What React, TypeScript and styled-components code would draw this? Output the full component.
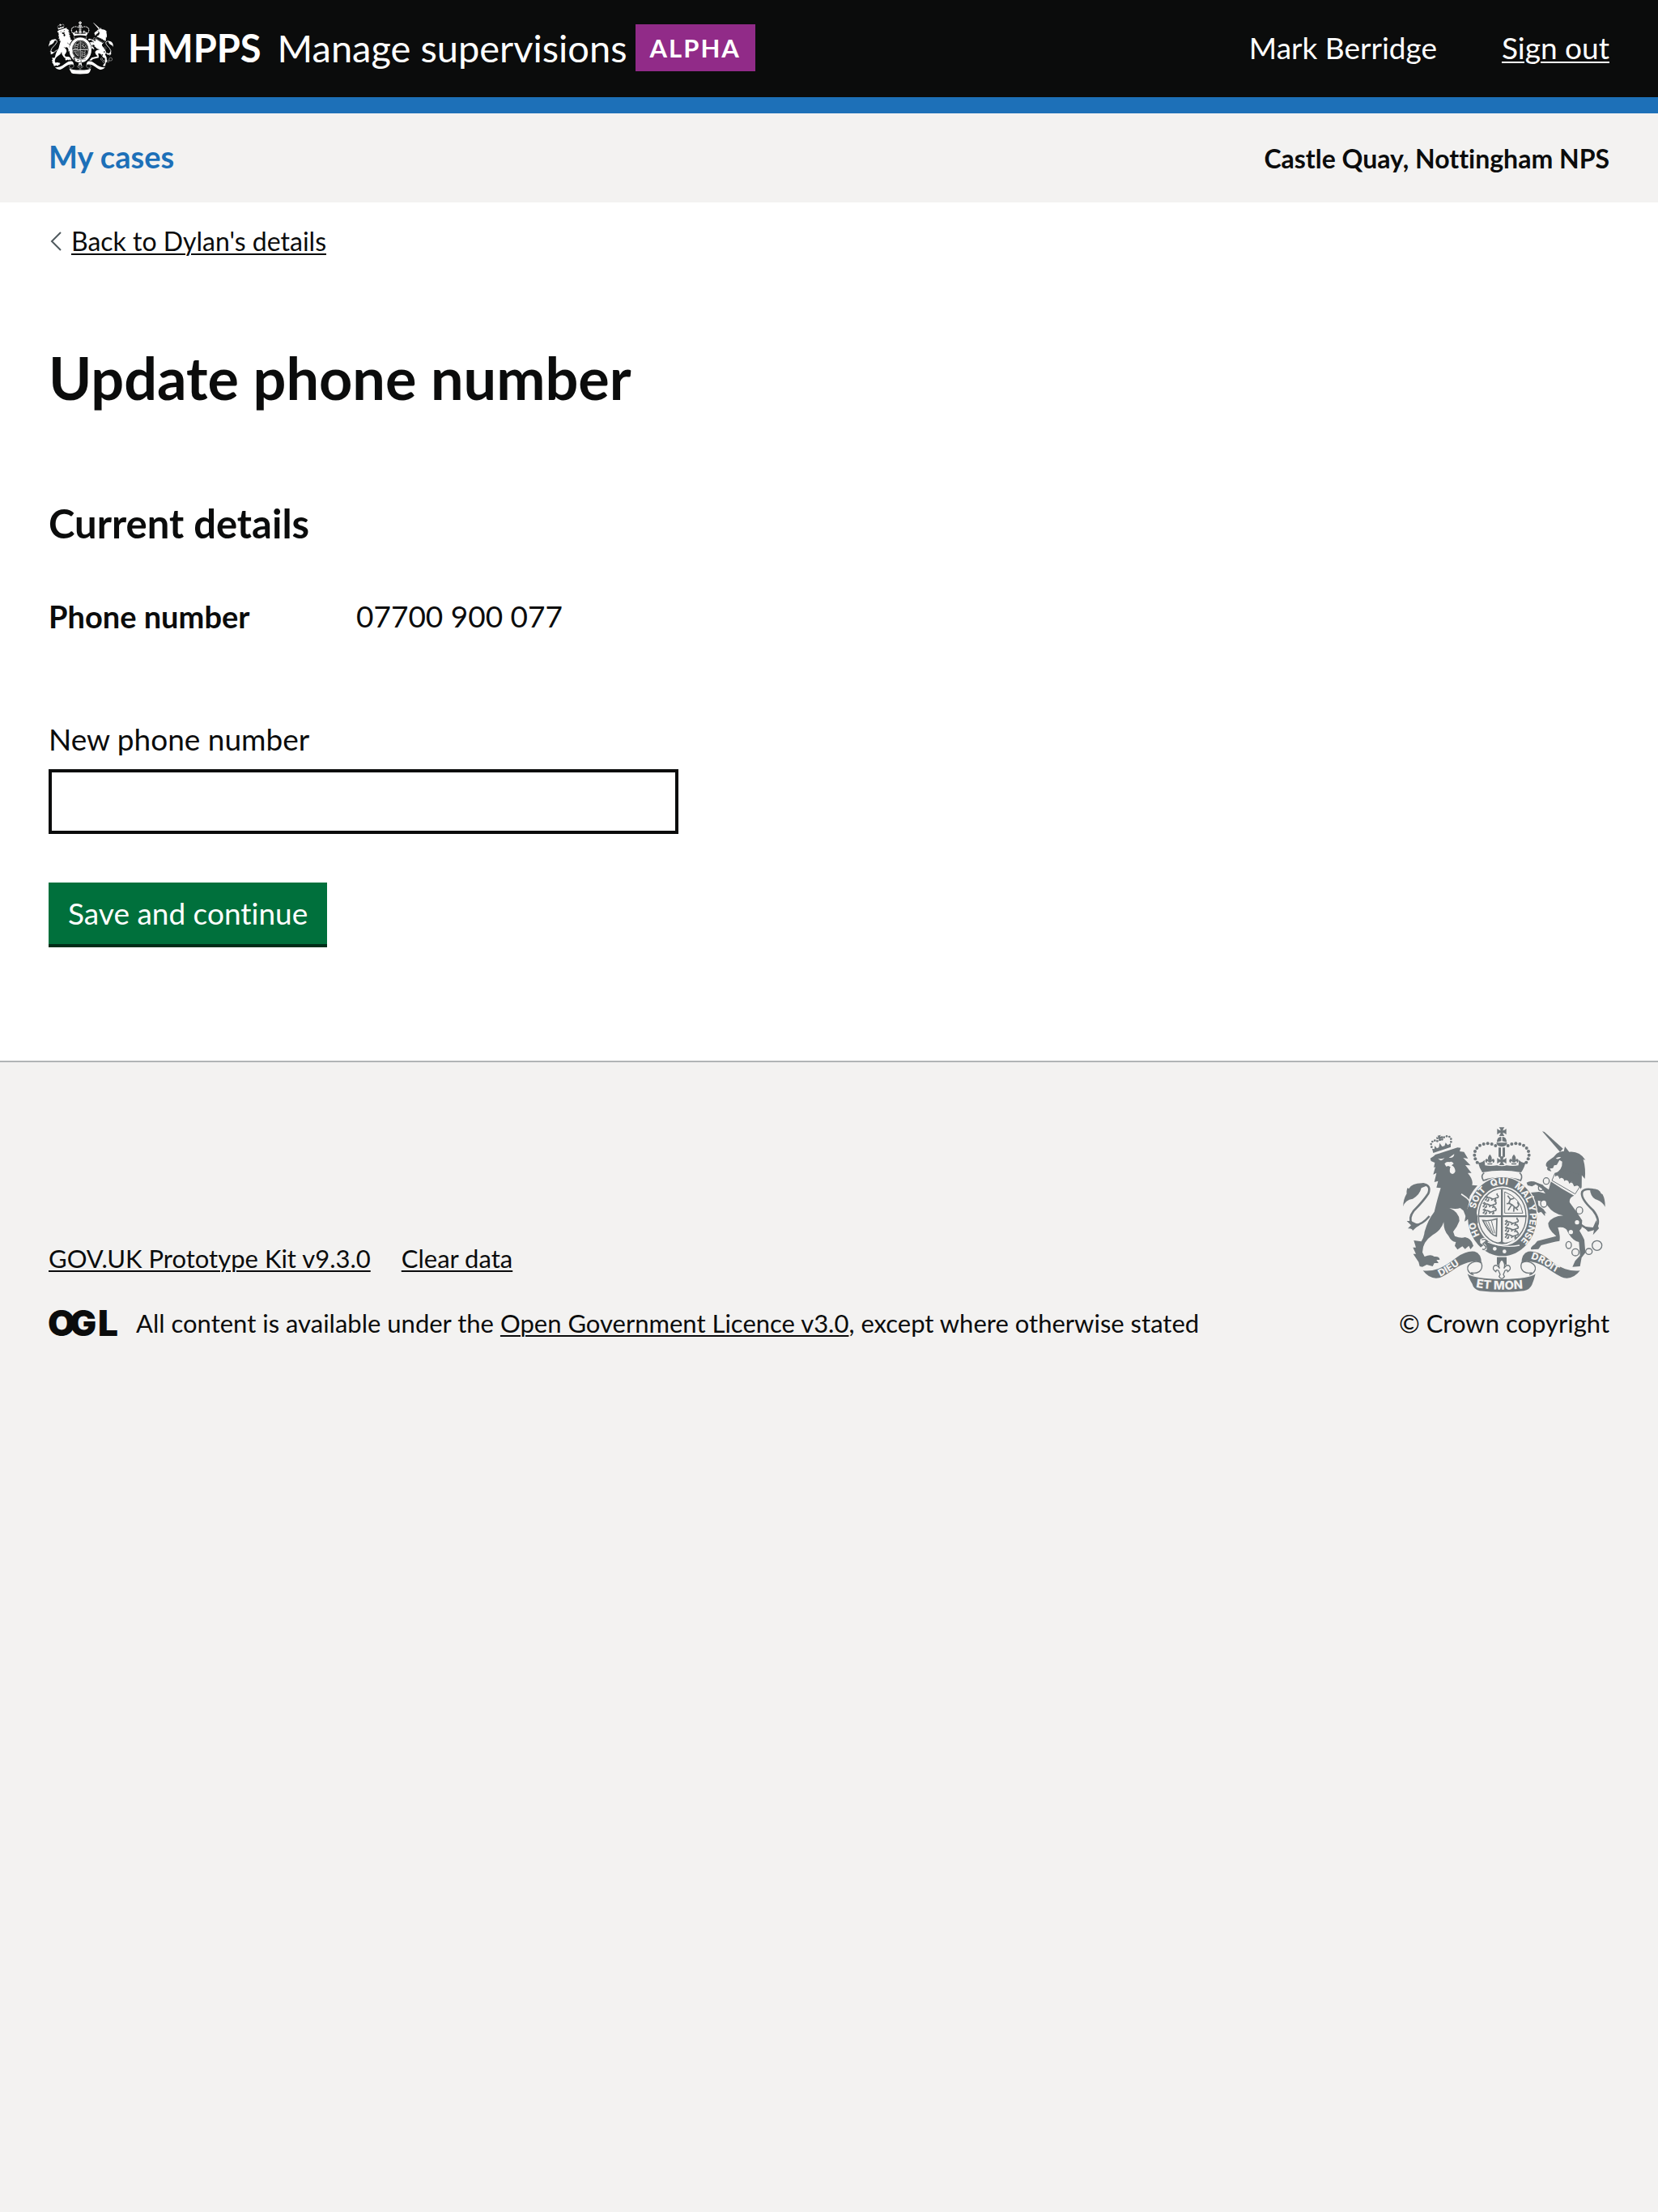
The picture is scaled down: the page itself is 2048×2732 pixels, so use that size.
import React from "react";
import styled, { createGlobalStyle } from "styled-components";

const ink = "#0b0c0c";
const paper = "#f3f2f1";
const blue = "#1d70b8";

const GlobalStyle = createGlobalStyle`
  *, *::before, *::after { box-sizing: border-box; }
  body {
    margin: 0;
    background: #ffffff;
    color: ${ink};
    font-family: Lato, "Liberation Sans", sans-serif;
    font-size: 37px;
    font-variant-ligatures: none;
    line-height: 50px;
  }
`;

const Page = styled.div`
  display: flex;
  flex-direction: column;
  min-height: 100vh;
`;

const Header = styled.header`
  display: flex;
  align-items: center;
  justify-content: space-between;
  min-height: 140px;
  padding: 0 60px 2px;
  border-bottom: 20px solid ${blue};
  background: ${ink};
  color: #ffffff;
`;

const Brand = styled.div`
  display: flex;
  align-items: center;
  font-size: 47px;
  line-height: 60px;
`;

const Organisation = styled.strong`
  margin: 0 20px 0 18px;
`;

const Tag = styled.strong`
  margin-left: 10px;
  padding: 9px 18px;
  background: #912b88;
  font-size: 31px;
  line-height: 40px;
  letter-spacing: 2px;
`;

const Account = styled.div`
  display: flex;
  gap: 80px;
`;

const TextLink = styled.a`
  color: inherit;
  text-decoration-line: underline;
  text-decoration-thickness: 2px;
  text-underline-offset: 3px;
`;

const NavBar = styled.nav`
  display: flex;
  align-items: baseline;
  justify-content: space-between;
  padding: 28px 60px 32px;
  background: ${paper};
`;

const NavLink = styled.a`
  color: ${blue};
  font-size: 38px;
  font-weight: 700;
  text-decoration: none;
`;

const Team = styled.strong`
  font-size: 32px;
  line-height: 40px;
`;

const Main = styled.main`
  padding: 28px 60px 140px;
`;

const BackLink = styled.div`
  display: flex;
  align-items: center;
  gap: 10px;
  font-size: 32px;
  line-height: 40px;
`;

const Title = styled.h1`
  margin: 108px 0 0;
  font-size: 72px;
  line-height: 80px;
`;

const Subtitle = styled.h2`
  margin: 110px 0 60px;
  font-size: 49px;
  line-height: 60px;
`;

const Summary = styled.dl`
  display: grid;
  grid-template-columns: 380px 1fr;
  margin: 0 0 102px;

  dt {
    font-size: 38px;
    font-weight: 700;
  }
  dd { margin: 0; }
`;

const Field = styled.div`
  display: flex;
  flex-direction: column;
  gap: 12px;
  max-width: 778px;
  margin-bottom: 60px;
`;

const TextInput = styled.input`
  width: 100%;
  height: 80px;
  padding: 10px;
  border: 4px solid ${ink};
  border-radius: 0;
  background: #ffffff;
  color: ${ink};
  font: inherit;
`;

const SaveButton = styled.button`
  display: block;
  padding: 13px 24px;
  border: 0;
  border-bottom: 4px solid #002d18;
  background: #00703c;
  color: #ffffff;
  font: inherit;
`;

const Footer = styled.footer`
  flex: 1;
  padding: 80px 60px;
  border-top: 2px solid #b1b4b6;
  background: ${paper};
  font-size: 31px;
  line-height: 40px;
`;

const FooterRow = styled.div`
  display: flex;
  align-items: flex-end;
  justify-content: space-between;
`;

const FooterMeta = styled.div`
  display: flex;
  flex-direction: column;
  gap: 40px;
`;

const FooterLinks = styled.div`
  display: flex;
  gap: 38px;
`;

const Licence = styled.div`
  display: flex;
  align-items: center;
  gap: 26px;
`;

const Copyright = styled.div`
  display: flex;
  flex-direction: column;
  align-items: center;
  gap: 18px;
`;

const Drawing = styled.svg`
  display: block;
  flex: none;
  overflow: visible;
`;

const gartersEdge = "M404 487 A102 119 0 0 1 404 249 A102 119 0 0 1 404 487";

const motto: [string, number][] = [
  ["HO", 102],
  ["SOIT", 202],
  ["QUI", 306],
  ["MAL", 392],
  ["Y", 478],
  ["PENSE", 508],
];

const pearls: [number, number][] = [
  [379, 105], [365, 99], [350, 97], [335, 99], [321, 104], [310, 114],
  [303, 126], [301, 140], [304, 154], [311, 167],
];

const lionPearls: [number, number][] = [
  [142, 110], [140, 99], [145, 90], [154, 86], [163, 88],
  [181, 82], [188, 74], [198, 70], [208, 72], [214, 80], [214, 91],
];

const chain: [number, number, number, number][] = [
  [567, 236, 11, 12], [547, 261, 9, 11], [558, 319, 12, 14], [690, 345, 12, 13],
  [650, 473, 10, 13], [675, 500, 13, 13], [725, 497, 12, 11], [755, 475, 18, 18],
];

type CrestProps = { width: number; height: number; fill: string; ground: string; lettered?: boolean };

function Lily({ x, y }: { x: number; y: number }) {
  return (
    <g transform={`translate(${x} ${y})`}>
      <path d="M0 -21 Q-12 -8 -4 4 Q-9 -8 -16 -2 Q-20 8 -11 11 Q-13 3 -7 5 L-4 9 H4 L7 5 Q13 3 11 11 Q20 8 16 -2 Q9 -8 4 4 Q12 -8 0 -21Z M-10 12 H10 L8 17 H-8Z" />
    </g>
  );
}

function CrossPattee({ x, y }: { x: number; y: number }) {
  return (
    <path transform={`translate(${x} ${y})`} d="M-10 -16 H10 Q4 -9 4 -4 Q9 -4 17 -11 V11 Q9 4 4 4 Q4 9 10 16 H-10 Q-4 9 -4 4 Q-9 4 -17 11 V-11 Q-9 -4 -4 -4 Q-4 -9 -10 -16Z" />
  );
}

function Passant({ x, y }: { x: number; y: number }) {
  return (
    <path
      transform={`translate(${x} ${y})`}
      fill="none"
      strokeWidth="5"
      d="M0 -4 L6 -8 L10 -2 M4 0 Q14 -6 22 0 T42 -2 M6 2 L0 8 M14 1 L12 9 L6 10 M28 1 L24 9 M38 0 L40 8 L34 10 M42 -2 Q52 -2 48 -10 Q42 -14 46 -18"
    />
  );
}

function Ribbon() {
  return (
    <>
      <path d="M110 568 Q138 571 165 562 Q196 550 235 519 Q270 493 302 497 Q326 504 327 540 Q313 529 292 535 Q262 540 234 557 Q190 588 170 595 Q136 602 110 568Z" />
      <path fill="none" strokeWidth="4" d="M326 540 Q314 530 292 538 Q272 548 276 564 Q280 578 298 584 M326 538 Q334 560 318 572 Q306 580 288 576" />
    </>
  );
}

function Crest({ width, height, fill, ground, lettered = false }: CrestProps) {
  const id = lettered ? "crest-large" : "crest-small";
  return (
    <Drawing
      width={width}
      height={height}
      viewBox="36 36 750 612"
      fill={fill}
      stroke={fill}
      strokeWidth="0"
      role="img"
      aria-label="Royal coat of arms"
    >
      <defs>
        <path id={`${id}-ring`} d={gartersEdge} />
        <path id={`${id}-left`} d="M174 590 Q205 575 232 555 Q262 534 310 520" />
        <path id={`${id}-mid`} d="M306 630 Q402 646 520 630" />
        <path id={`${id}-right`} d="M509 524 Q545 534 572 555 Q605 580 670 600" />
      </defs>

      {/* crown */}
      <CrossPattee x={402} y={53} />
      <path d="M384 92 Q384 73 400 72 V88Z M404 72 Q420 73 420 92 L404 88Z M382 94 H422 Q421 108 402 109 Q383 108 382 94Z" />
      <path d="M390 112 H399 V146 H390Z M405 112 H414 V146 H405Z" />
      {pearls.map(([x, y]) => (
        <React.Fragment key={`${x}-${y}`}>
          <circle cx={x} cy={y} r="6" />
          <circle cx={804 - x} cy={y} r="6" />
        </React.Fragment>
      ))}
      <CrossPattee x={402} y={161} />
      <Lily x={358} y={158} />
      <Lily x={447} y={158} />
      <path d="M314 166 Q326 172 338 158 L340 178 Q360 182 384 178 Q402 184 420 178 Q444 182 464 178 L466 158 Q478 172 490 166 Q488 184 474 204 Q402 190 330 204 Q318 186 314 166Z" />
      <path fill="none" strokeWidth="5" d="M337 206 Q322 216 334 234 Q402 212 472 234 Q482 216 468 206" />

      {/* lion */}
      {lionPearls.map(([x, y]) => (
        <circle key={`${x}-${y}`} cx={x} cy={y} r="4" />
      ))}
      <path d="M164 68 L176 65 L173 72 L182 69 L185 79 L176 77 L178 86 L168 88 L169 79 L161 82 L159 73 L167 75Z" />
      <path d="M144 116 L152 118 L154 106 L162 115 L169 111 L172 95 L181 108 L190 106 L194 94 L202 103 L213 96 L213 110 L148 132Z" />
      <path d="M137 152 Q150 146 156 138 Q190 128 238 112 L250 113 L246 126 L262 128 L277 153 L259 150 L286 178 L267 177 L290 206 L276 206 Q298 232 292 251 L312 253 Q296 270 284 292 L280 312 Q296 336 311 366 L314 392 L302 396 L292 388 L282 396 L278 378 L264 386 L268 366 L260 346 L248 336 Q232 342 208 336 Q246 352 245 384 Q238 404 222 424 L228 440 Q252 450 266 444 Q290 448 297 476 L286 489 L280 476 L266 488 L256 478 L238 490 L228 476 L232 462 Q216 462 204 438 Q186 418 187 388 Q178 418 146 436 Q108 462 108 500 L116 516 Q140 506 152 516 Q172 514 172 528 L160 528 L168 540 L152 540 L146 552 L124 546 L108 554 L98 552 L94 536 L74 506 L84 506 L73 482 L84 482 L76 456 L104 460 Q114 444 116 424 Q128 380 152 350 Q164 300 176 262 L160 260 L166 236 L152 240 L160 206 L148 212 L156 184 L150 186 L154 168 L140 162Z" />
      <path fill={ground} d="M166 152 Q180 156 190 150 Q178 168 166 152Z M206 150 L226 136 Q226 152 206 150Z M190 172 Q198 162 208 166 Q218 160 224 172 L216 178 Q228 182 230 200 Q222 218 210 204 Q208 192 212 184 L204 180 L196 182Z" />
      <path fill="none" stroke={ground} strokeWidth="5" d="M252 284 Q290 306 310 350" />
      <path fill="none" strokeWidth="8" d="M134 366 Q98 408 70 396 Q54 376 76 346 Q112 310 130 282 Q142 250 108 247" />
      <path d="M112 244 Q70 242 58 264 L52 262 Q48 278 50 282 Q36 306 37 330 Q44 306 72 302 Q98 288 104 262 L128 252Z M66 384 L50 384 L66 400 L54 412 Q70 410 72 420 Q82 408 98 400Z" />

      {/* unicorn */}
      <path d="M552 52 L560 54 L629 116 L618 128Z" />
      <path d="M566 180 Q564 168 576 160 Q596 148 606 134 Q618 124 632 126 L636 108 L652 128 Q690 124 712 158 L704 156 Q714 190 710 228 L698 214 V262 L684 246 L620 224 Q626 216 596 210 Q628 196 626 164 L616 158 L606 176 L596 178 L592 188 L580 190 L586 200 L576 198 Q566 192 572 186Z" />
      <path fill={ground} d="M602 152 Q612 144 622 148 Q612 158 602 152Z" />
      <path fill={ground} stroke={fill} strokeWidth="3" d="M598 210 L588 234 L674 284 L692 256Z" />
      <path d="M598 206 L600 220 L610 214 L616 228 L628 220 L634 236 L646 228 L652 246 L662 238 L670 256 L684 252 L696 266 L698 214 L640 196Z" />
      <path d="M584 238 Q624 266 670 290 Q650 298 654 316 Q680 350 700 382 L698 410 L690 420 Q702 440 708 454 L712 502 L698 520 L692 552 L664 554 L674 532 L692 512 L688 462 Q664 458 646 424 Q640 404 610 408 Q620 440 616 458 Q590 462 548 474 L538 488 L512 490 Q504 484 524 470 L534 458 L604 440 Q574 416 574 392 Q588 366 630 364 Q592 358 572 328 L560 314 L536 308 L538 326 L556 340 L568 356 L562 354 V366 L548 350 L538 354 L526 340 L516 322 Q520 300 522 292 L500 290 L518 318 L506 308 L492 296 L500 280 L540 276 L564 282 L550 264 L528 248 L514 256 L498 252 L494 242 Q504 234 522 238 L548 248 L576 268Z" />
      <path fill="none" strokeWidth="8" d="M690 394 Q730 428 754 404 Q768 380 740 344 Q692 300 700 276 Q708 262 740 268" />
      <path d="M730 264 Q764 262 770 282 L776 286 Q786 306 785 332 Q776 314 756 306 Q736 300 730 276Z M752 382 L762 412 L740 436 L744 418 L722 424 L704 404 L740 408Z" />
      {chain.map(([x, y, rx, ry]) => (
        <ellipse key={`${x}-${y}`} cx={x} cy={y} rx={rx} ry={ry} fill="none" strokeWidth="4" />
      ))}
      <g fill={ground}>
        <circle cx="681" cy="389" r="8" />
        <circle cx="658" cy="425" r="8" />
        <ellipse cx="558" cy="319" rx="9" ry="11" />
        <ellipse cx="690" cy="345" rx="9" ry="10" />
      </g>

      {/* garter and shield */}
      <ellipse cx="404" cy="368" rx="132" ry="150" fill={ground} />
      <ellipse cx="404" cy="368" rx="128" ry="146" />
      <ellipse cx="404" cy="366" rx="96" ry="110" fill={ground} />
      <ellipse cx="404" cy="366" rx="88" ry="102" fill="none" strokeWidth="4" />
      <path d="M399 266 H406 V462 L424 468 H380 L399 460Z M314 363 H494 V370 H314Z" />
      <Passant x={340} y={300} />
      <Passant x={332} y={324} />
      <Passant x={332} y={348} />
      <Passant x={414} y={390} />
      <Passant x={414} y={414} />
      <Passant x={414} y={438} />
      <path fill="none" strokeWidth="3" d="M413 276 V355 H480 Q472 300 413 276Z" />
      <path fill="none" strokeWidth="5" d="M424 290 L434 304 L428 318 L440 324 L462 344 M434 304 L448 300 M440 322 L426 344 M448 330 L446 350 M452 336 Q472 330 460 314 M434 318 L420 320" />
      <path fill="none" strokeWidth="5" d="M332 382 Q356 386 384 376 L382 440 Q360 438 332 382Z" />
      <path fill="none" strokeWidth="3" d="M342 386 L362 424 M352 386 L370 430 M364 384 L376 430" />
      <path fill={ground} d="M322 452 Q338 440 346 452 Q344 462 336 466 Q350 476 346 492 Q330 498 322 484 L334 474 L322 466Z" />
      <path fill="none" strokeWidth="4" d="M328 454 Q342 448 344 458 L332 468 L344 480 Q340 494 330 488" />
      <path fill="none" stroke={ground} strokeWidth="4" d="M350 462 Q408 486 468 474 M424 468 Q440 464 450 450" />
      <circle cx="376" cy="487" r="7" fill={ground} />
      <circle cx="412" cy="497" r="7" fill={ground} />
      {/* paw over the garter */}
      <path d="M284 318 Q306 340 312 366 L314 394 L302 386 L290 396 L282 376 L270 380 L268 352Z" />

      {/* pendant lily */}
      <path d="M384 518 H420 V546 H384Z" />
      <path
        fill={ground}
        strokeWidth="4"
        d="M402 526 Q386 542 394 560 Q386 544 374 550 Q364 562 380 572 Q382 562 390 568 L396 582 L392 590 Q402 606 412 590 L408 582 L414 568 Q422 562 424 572 Q440 562 430 550 Q418 544 410 560 Q418 542 402 526Z"
      />

      {/* ribbons */}
      <Ribbon />
      <g transform="matrix(-1 0 0 1 802 0)">
        <Ribbon />
      </g>
      <path d="M275 580 Q298 598 402 600 Q508 598 527 580 Q522 602 514 620 Q506 638 484 643 Q402 652 320 643 Q298 638 292 616 Q284 604 275 580Z" />

      {lettered && (
        <g fill={ground} fontFamily="Inter, sans-serif" fontWeight="800" fontSize="36" aria-hidden="true">
          {motto.map(([word, offset]) => (
            <text key={word} fontSize="34">
              <textPath href={`#${id}-ring`} startOffset={offset}>{word}</textPath>
            </text>
          ))}
          <text><textPath href={`#${id}-left`}>DIEU</textPath></text>
          <text fontSize="44"><textPath href={`#${id}-mid`}>ET MON</textPath></text>
          <text><textPath href={`#${id}-right`}>DROIT</textPath></text>
        </g>
      )}
    </Drawing>
  );
}

function OglLogo() {
  return (
    <Drawing width="82" height="34" viewBox="0 0 82 34" fill={ink} role="img" aria-label="Open Government Licence">
      <text y="33" x="-1 26 61" fontFamily="Inter, sans-serif" fontWeight="900" fontSize="44">OGL</text>
    </Drawing>
  );
}

export default function App() {
  return (
    <Page>
      <GlobalStyle />
      <Header>
        <Brand>
          <Crest width={80} height={68} fill="#ffffff" ground={ink} />
          <Organisation>HMPPS</Organisation>
          <span>Manage supervisions</span>
          <Tag>ALPHA</Tag>
        </Brand>
        <Account>
          <span>Mark Berridge</span>
          <TextLink href="#sign-out">Sign out</TextLink>
        </Account>
      </Header>
      <NavBar>
        <NavLink href="#cases">My cases</NavLink>
        <Team>Castle Quay, Nottingham NPS</Team>
      </NavBar>
      <Main>
        <BackLink>
          <svg width="18" height="24" viewBox="0 0 18 24" fill="none" stroke="#505a5f" strokeWidth="2" aria-hidden="true">
            <path d="M15 1 L4 12 L15 23" />
          </svg>
          <TextLink href="#details">Back to Dylan's details</TextLink>
        </BackLink>
        <Title>Update phone number</Title>
        <Subtitle>Current details</Subtitle>
        <Summary>
          <dt>Phone number</dt>
          <dd>07700 900 077</dd>
        </Summary>
        <form onSubmit={(event) => event.preventDefault()}>
          <Field>
            <label htmlFor="phone">New phone number</label>
            <TextInput id="phone" name="phone" type="tel" />
          </Field>
          <SaveButton type="submit">Save and continue</SaveButton>
        </form>
      </Main>
      <Footer>
        <FooterRow>
          <FooterMeta>
            <FooterLinks>
              <TextLink href="#kit">GOV.UK Prototype Kit v9.3.0</TextLink>
              <TextLink href="#clear">Clear data</TextLink>
            </FooterLinks>
            <Licence>
              <OglLogo />
              <span>
                All content is available under the{" "}
                <TextLink href="#licence">Open Government Licence v3.0</TextLink>, except where otherwise stated
              </span>
            </Licence>
          </FooterMeta>
          <Copyright>
            <Crest width={250} height={204} fill="#6f777b" ground={paper} lettered />
            <span>© Crown copyright</span>
          </Copyright>
        </FooterRow>
      </Footer>
    </Page>
  );
}
